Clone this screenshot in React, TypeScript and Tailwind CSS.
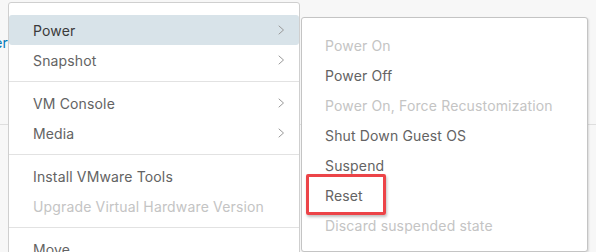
import React from "react";

type Item = { label: string; sub?: boolean; disabled?: boolean; active?: boolean } | "sep";

const mainItems: Item[] = [
  { label: "Power", sub: true, active: true },
  { label: "Snapshot", sub: true },
  "sep",
  { label: "VM Console", sub: true },
  { label: "Media", sub: true },
  "sep",
  { label: "Install VMware Tools" },
  { label: "Upgrade Virtual Hardware Version", disabled: true },
  "sep",
  { label: "Move" },
];

const powerItems = [
  { label: "Power On", disabled: true },
  { label: "Power Off" },
  { label: "Power On, Force Recustomization", disabled: true },
  { label: "Shut Down Guest OS" },
  { label: "Suspend" },
  { label: "Reset" },
  { label: "Discard suspended state", disabled: true },
];

function Chevron() {
  return (
    <svg width="7" height="10" viewBox="0 0 7 10" fill="none">
      <path d="M1 1l4.5 4-4.5 4" stroke="#999999" strokeWidth="1" strokeLinecap="round" strokeLinejoin="round" />
    </svg>
  );
}

export default function App() {
  return (
    <div
      className="relative w-[596px] h-[252px] overflow-hidden bg-[#f7f7f7] text-[14px] tracking-[0.15px]"
      style={{ fontFamily: "Inter, 'Noto Sans', sans-serif" }}
    >
      {/* page behind the menus */}
      <div className="flex flex-col">
        <div className="h-[124px] pt-[33px]">
          <div className="w-[8px] overflow-hidden flex justify-end text-[#0079b8] leading-[20px]">
            <span className="whitespace-nowrap">Power</span>
          </div>
        </div>
        <div className="h-px bg-[#dedede]" />
      </div>

      {/* main context menu */}
      <div className="absolute left-[8px] top-[2px] w-[292px] h-[300px] bg-white border border-[#cfcfcf] rounded-[3px] pt-[12px]">
        {mainItems.map((item, i) =>
          item === "sep" ? (
            <div key={i} className="h-px bg-[#e2e2e2] my-[6px]" />
          ) : (
            <div
              key={i}
              className={`h-[30px] flex items-center justify-between pl-[24px] pr-[14px] rounded-[3px] ${
                item.active ? "bg-[#d8e3e9] text-[#3a3a3a]" : item.disabled ? "text-[#c4c4c4]" : "text-[#636363]"
              }`}
            >
              <span>{item.label}</span>
              {item.sub && <Chevron />}
            </div>
          )
        )}
      </div>

      {/* power submenu */}
      <div className="absolute left-[301px] top-[17px] w-[287px] h-[235px] bg-white border border-[#c4c4c4] rounded-[3px] pt-[12px] shadow-[1px_1px_2px_rgba(0,0,0,0.12)]">
        {powerItems.map((item) => (
          <div
            key={item.label}
            className={`h-[30px] flex items-center pl-[23px] ${item.disabled ? "text-[#c4c4c4]" : "text-[#636363]"}`}
          >
            {item.label}
          </div>
        ))}
      </div>

      {/* highlight box around Reset */}
      <div className="absolute left-[306px] top-[174px] w-[80px] h-[41px] border-[3px] border-[#ec4448] rounded-[2px] shadow-[1px_2px_3px_rgba(0,0,0,0.25)]" />
    </div>
  );
}
